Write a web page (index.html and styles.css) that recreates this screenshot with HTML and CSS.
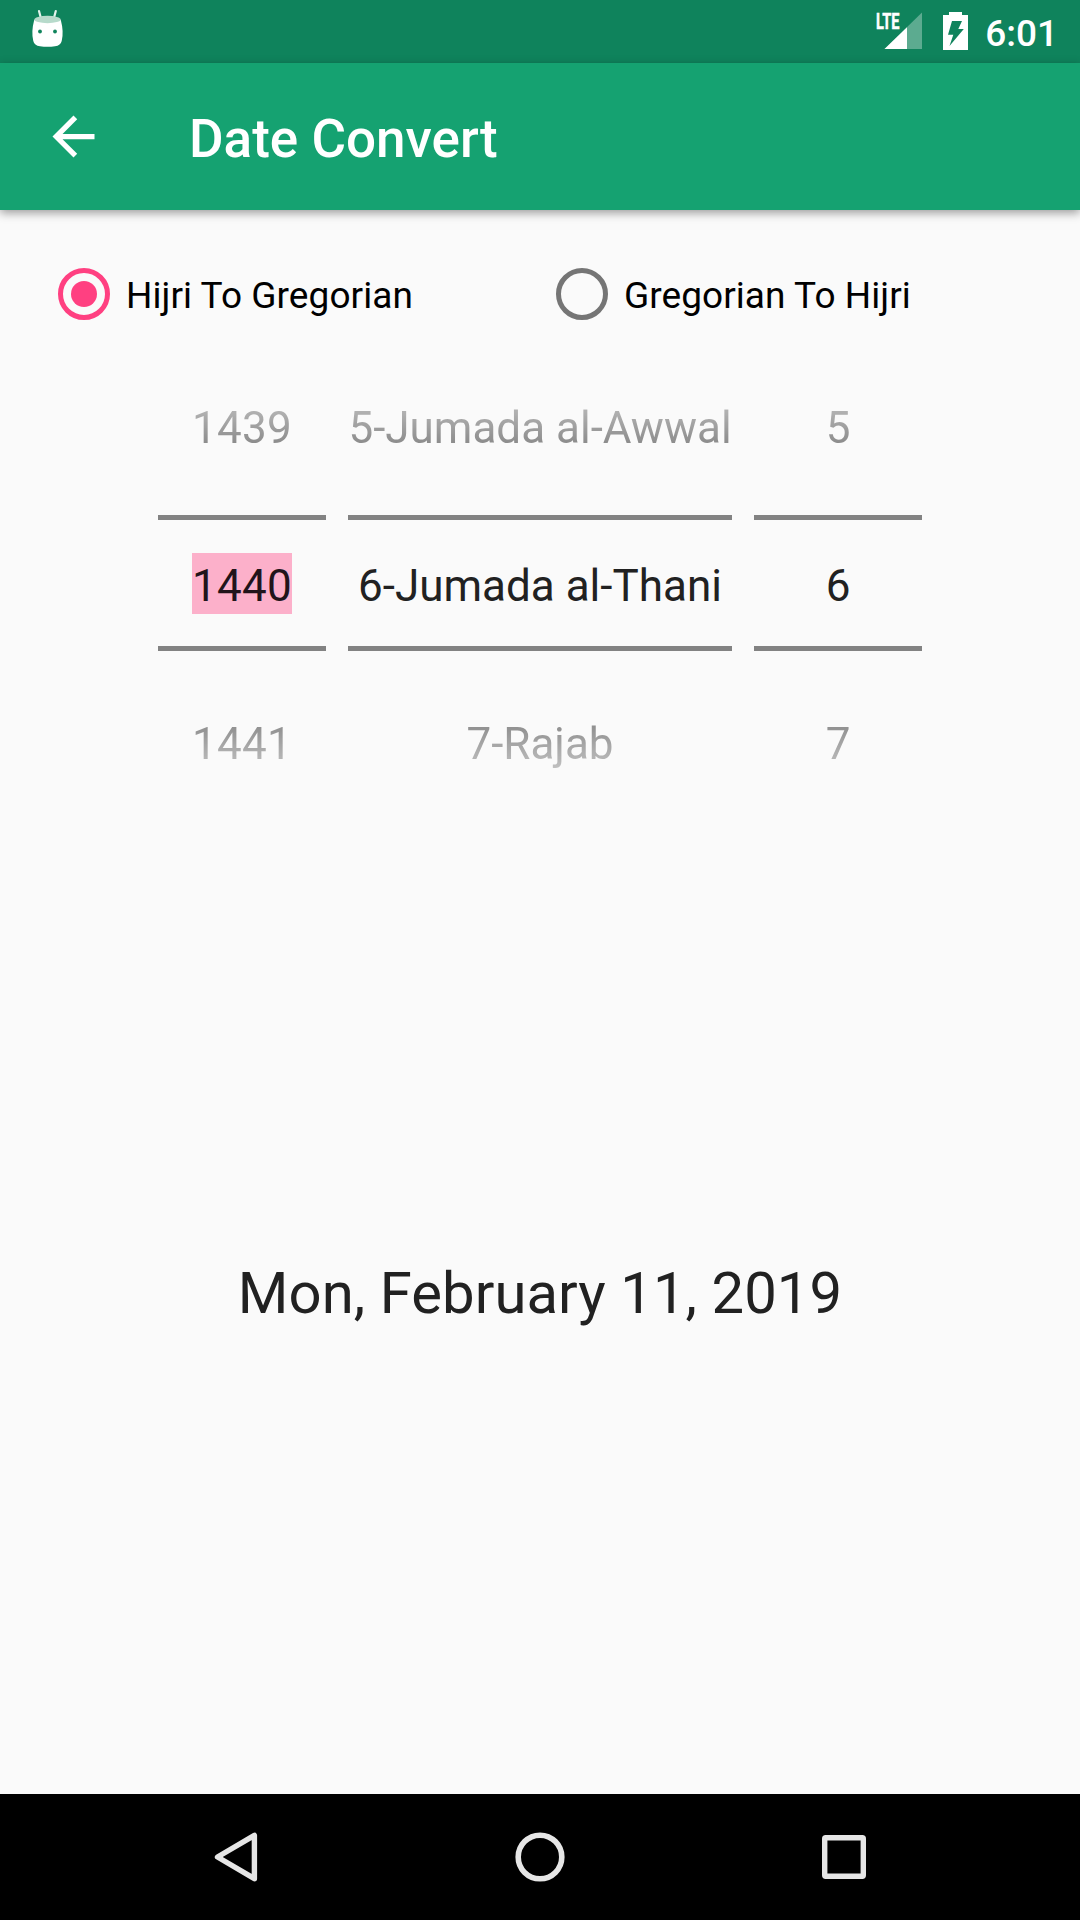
FILE: index.html
```html
<!DOCTYPE html>
<html lang="en">
<head>
<meta charset="utf-8">
<title>Date Convert</title>
<link rel="stylesheet" href="styles.css">
</head>
<body>
<div class="screen">
  <div class="status-bar">
    <svg class="status-debug" viewBox="0 0 36 42" width="36" height="42">
      <path d="M10 5l1.600 6M26.800 5l-1.600 6" stroke="#e4f3ed" stroke-width="2.200" stroke-linecap="round" fill="none"/>
      <path d="M5.200 14Q2 26 4.300 35Q5.300 39.500 11 40.300Q18.500 41.300 26 40.300Q31.700 39.500 32.700 35Q35 26 31.800 14Z" fill="#fff"/>
      <ellipse cx="18.500" cy="13.500" rx="13.300" ry="3.700" fill="#b7dacb"/>
      <circle cx="11" cy="25.500" r="1.900" fill="#10845c"/>
      <circle cx="26" cy="25.500" r="1.900" fill="#10845c"/>
    </svg>
    <div class="status-right">
      <svg class="status-signal" viewBox="0 0 48 42" width="48" height="42">
        <path d="M10.500 42L48 5.500V42Z" fill="#fff" fill-opacity=".32"/>
        <path d="M10.500 42L33 20.200V42Z" fill="#fff"/>
        <text class="lte" x="2" y="22.300" textLength="23.500" lengthAdjust="spacingAndGlyphs">LTE</text>
      </svg>
      <svg class="status-battery" viewBox="0 0 25 38" width="25" height="38">
        <path fill-rule="evenodd" fill="#fff" d="M6 0H19V3H25V38H0V3H6ZM9 9L5 22.700H10.300L6.500 34L20.800 17H15.300L19 9Z"/>
      </svg>
      <span class="clock">6:01</span>
    </div>
  </div>

  <header class="toolbar">
    <svg class="back" viewBox="0 0 24 24" width="63" height="63">
      <path fill="#fff" d="M20 11H7.830l5.590-5.590L12 4l-8 8 8 8 1.410-1.410L7.830 13H20v-2z"/>
    </svg>
    <h1 class="title">Date Convert</h1>
  </header>

  <main class="content">
    <div class="radio-group">
      <div class="radio">
        <span class="radio-mark checked"></span>
        <span class="radio-label">Hijri To Gregorian</span>
      </div>
      <div class="radio">
        <span class="radio-mark"></span>
        <span class="radio-label">Gregorian To Hijri</span>
      </div>
    </div>

    <div class="pickers">
      <div class="picker year">
        <div class="row previous">1439</div>
        <div class="row current"><span class="selection">1440</span></div>
        <div class="row next">1441</div>
      </div>
      <div class="picker">
        <div class="row previous">5-Jumada al-Awwal</div>
        <div class="row current">6-Jumada al-Thani</div>
        <div class="row next">7-Rajab</div>
      </div>
      <div class="picker">
        <div class="row previous">5</div>
        <div class="row current">6</div>
        <div class="row next">7</div>
      </div>
    </div>

    <p class="result">Mon, February 11, 2019</p>
  </main>

  <nav class="nav-bar">
    <svg viewBox="0 0 60 60" width="60" height="60">
      <path d="M48.400 8.300V51.700L11.500 30Z" fill="none" stroke="#e6e6e6" stroke-width="5.400" stroke-linejoin="round"/>
    </svg>
    <svg viewBox="0 0 60 60" width="60" height="60">
      <circle cx="30" cy="30" r="21.800" fill="none" stroke="#e6e6e6" stroke-width="5.600"/>
    </svg>
    <svg viewBox="0 0 60 60" width="60" height="60">
      <rect x="10.700" y="10.700" width="38.600" height="38.600" rx="1" fill="none" stroke="#e6e6e6" stroke-width="5.400"/>
    </svg>
  </nav>
</div>
</body>
</html>
```

FILE: styles.css
```css
* {
  box-sizing: border-box;
}

body {
  margin: 0;
  background: #fafafa;
  font-family: Roboto, sans-serif;
  color: #212121;
}

.screen {
  display: flex;
  flex-direction: column;
  width: 1080px;
  height: 1920px;
  overflow: hidden;
}

.status-bar {
  display: flex;
  justify-content: space-between;
  height: 63px;
  padding: 0 22px 0 29px;
  background: #0f835c;
}

.status-debug {
  margin-top: 6px;
}

.status-right {
  display: flex;
}

.status-signal {
  margin: 7px 21px 0 0;
}

.lte {
  font-size: 22px;
  font-weight: 700;
  fill: #fff;
  stroke: #fff;
  stroke-width: .5px;
}

.status-battery {
  margin: 12px 17px 0 0;
}

.clock {
  margin-top: 3px;
  font-size: 37px;
  font-weight: 500;
  line-height: 62px;
  color: #fff;
}

.toolbar {
  display: flex;
  align-items: center;
  height: 147px;
  padding-left: 42px;
  background: #15a271;
  box-shadow: 0 3px 9px rgba(0, 0, 0, .38);
}

.title {
  margin: 4px 0 0 84px;
  font-size: 53px;
  font-weight: 500;
  line-height: 62px;
  color: #fff;
}

.content {
  flex: 1;
}

.radio-group {
  display: grid;
  grid-template-columns: 498px 1fr;
  padding: 53px 0 0 58px;
}

.radio {
  display: flex;
  align-items: center;
  height: 62px;
}

.radio-mark {
  display: grid;
  place-items: center;
  width: 52px;
  height: 52px;
  margin-right: 16px;
  border: 5px solid #757575;
  border-radius: 50%;
}

.radio-mark.checked {
  border-color: #ff4081;
}

.radio-mark.checked::after {
  content: "";
  width: 26px;
  height: 26px;
  border-radius: 50%;
  background: #ff4081;
}

.radio-label {
  padding-top: 3px;
  font-size: 37px;
  line-height: 44px;
  letter-spacing: .06px;
  color: #000;
}

.pickers {
  display: grid;
  grid-template-columns: 168px 384px 168px;
  justify-content: center;
  column-gap: 22px;
  padding-top: 22px;
}

.picker {
  display: grid;
  grid-template-columns: 100%;
  grid-template-rows: 168px 136px 168px;
  font-size: 44px;
  line-height: 61px;
  text-align: center;
  white-space: nowrap;
}

.year {
  letter-spacing: .3px;
}

.previous {
  padding-top: 51px;
  mask-image: linear-gradient(to bottom, transparent, rgba(0, 0, 0, .88));
}

.current {
  padding-top: 33px;
  border-top: 5px solid #828282;
  border-bottom: 5px solid #828282;
  line-height: 66px;
}

.selection {
  display: block;
  width: 100px;
  height: 61px;
  margin: 0 auto;
  background: #fcb0ca;
  color: #21141a;
}

.next {
  padding-top: 63px;
  mask-image: linear-gradient(to top, transparent, rgba(0, 0, 0, .88));
}

.result {
  margin: 440px 0 0;
  font-size: 58px;
  line-height: 68px;
  letter-spacing: .07px;
  text-align: center;
}

.nav-bar {
  display: grid;
  grid-template-columns: repeat(3, 304px);
  justify-content: center;
  place-items: center;
  height: 126px;
  background: #000;
}
```
